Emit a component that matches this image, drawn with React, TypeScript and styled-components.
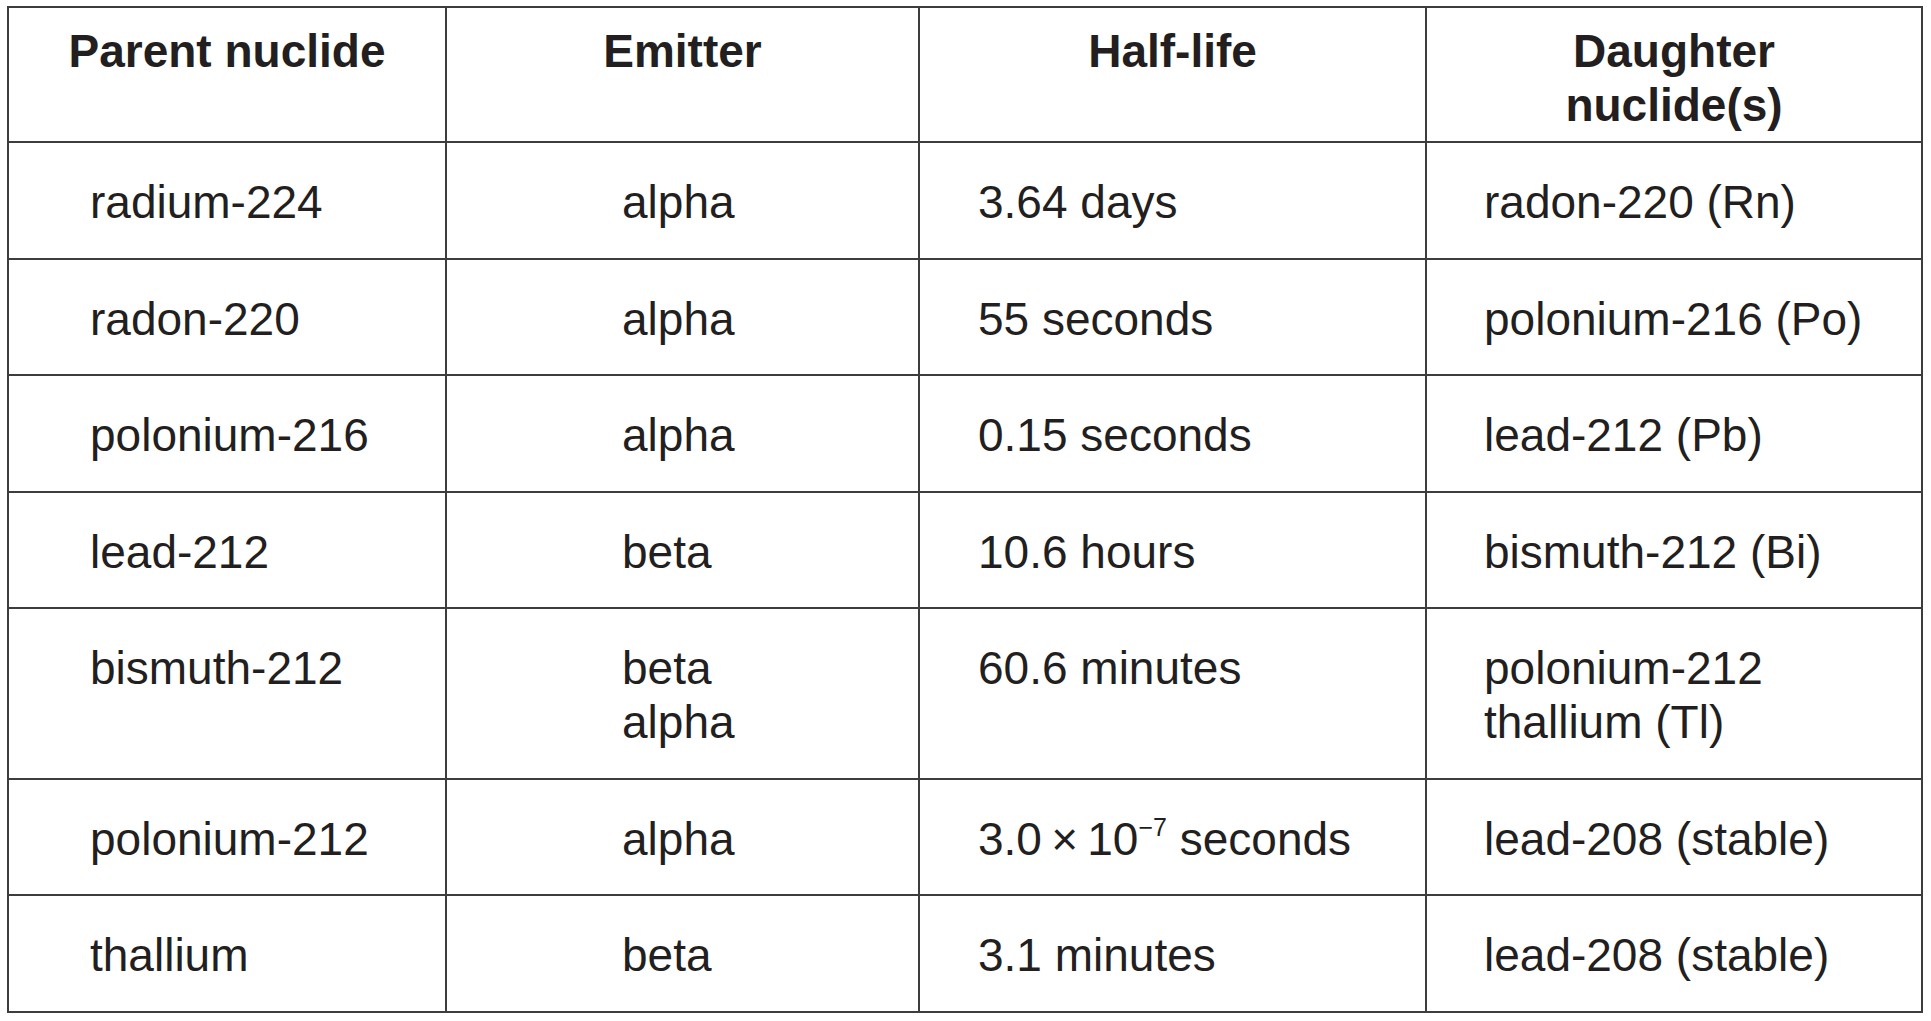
import React from 'react';
import styled, { createGlobalStyle } from 'styled-components';

type Row = {
    parent: string;
    emitter: string[];
    halfLife: React.ReactNode;
    daughter: string[];
}

const GlobalStyle = createGlobalStyle`
    html, body {
        margin: 0;
        padding: 0;
        background: #ffffff;
    }
`

const Page = styled.div`
    padding: 6px 0 0 7px;
    font-family: "Liberation Sans", Arial, Helvetica, sans-serif;
    color: #231f20;
`

const Table = styled.table`
    width: 1916px;
    table-layout: fixed;
    border-collapse: separate;
    border-spacing: 0;
    border-top: 2px solid #3d3d3d;
    border-left: 2px solid #3d3d3d;
    font-size: 46px;
    line-height: 54px;
`

const HeadCell = styled.th<{$width: number}>`
    box-sizing: border-box;
    width: ${({$width}) => $width}px;
    padding: 16px 0 9px 0;
    border-right: 2px solid #3d3d3d;
    border-bottom: 2px solid #3d3d3d;
    vertical-align: top;
    text-align: center;
    font-weight: bold;
`

const Cell = styled.td<{$inset: number}>`
    box-sizing: border-box;
    padding: 32px 0 28.5px ${({$inset}) => $inset}px;
    border-right: 2px solid #3d3d3d;
    border-bottom: 2px solid #3d3d3d;
    vertical-align: top;
    text-align: left;
    font-weight: normal;
    white-space: nowrap;
`

const Line = styled.div`
    display: block;
`

const Sup = styled.sup`
    font-size: 25px;
    line-height: 0;
    vertical-align: 0;
    position: relative;
    top: -19px;
`

const rows: Row[] = [
    { parent: 'radium-224', emitter: ['alpha'], halfLife: '3.64 days', daughter: ['radon-220 (Rn)'] },
    { parent: 'radon-220', emitter: ['alpha'], halfLife: '55 seconds', daughter: ['polonium-216 (Po)'] },
    { parent: 'polonium-216', emitter: ['alpha'], halfLife: '0.15 seconds', daughter: ['lead-212 (Pb)'] },
    { parent: 'lead-212', emitter: ['beta'], halfLife: '10.6 hours', daughter: ['bismuth-212 (Bi)'] },
    { parent: 'bismuth-212', emitter: ['beta', 'alpha'], halfLife: '60.6 minutes', daughter: ['polonium-212', 'thallium (Tl)'] },
    {
        parent: 'polonium-212',
        emitter: ['alpha'],
        halfLife: <>3.0{'\u2009'}×{'\u2009'}10<Sup>−7</Sup> seconds</>,
        daughter: ['lead-208 (stable)'],
    },
    { parent: 'thallium', emitter: ['beta'], halfLife: '3.1 minutes', daughter: ['lead-208 (stable)'] },
];

// column widths incl. right border, and left inset of body text
const columns = [
    { title: ['Parent nuclide'], width: 438, inset: 81 },
    { title: ['Emitter'], width: 473, inset: 175 },
    { title: ['Half-life'], width: 507, inset: 58 },
    { title: ['Daughter', 'nuclide(s)'], width: 496, inset: 57 },
];

export default function App() {
    return (
        <Page>
            <GlobalStyle />
            <Table>
                <thead>
                    <tr>
                        {columns.map((col) => (
                            <HeadCell key={col.title.join(' ')} $width={col.width}>
                                {col.title.map((line) => (
                                    <Line key={line}>{line}</Line>
                                ))}
                            </HeadCell>
                        ))}
                    </tr>
                </thead>
                <tbody>
                    {rows.map((row) => (
                        <tr key={row.parent}>
                            <Cell $inset={columns[0].inset}>{row.parent}</Cell>
                            <Cell $inset={columns[1].inset}>
                                {row.emitter.map((e) => <Line key={e}>{e}</Line>)}
                            </Cell>
                            <Cell $inset={columns[2].inset}>{row.halfLife}</Cell>
                            <Cell $inset={columns[3].inset}>
                                {row.daughter.map((d) => <Line key={d}>{d}</Line>)}
                            </Cell>
                        </tr>
                    ))}
                </tbody>
            </Table>
        </Page>
    );
}
